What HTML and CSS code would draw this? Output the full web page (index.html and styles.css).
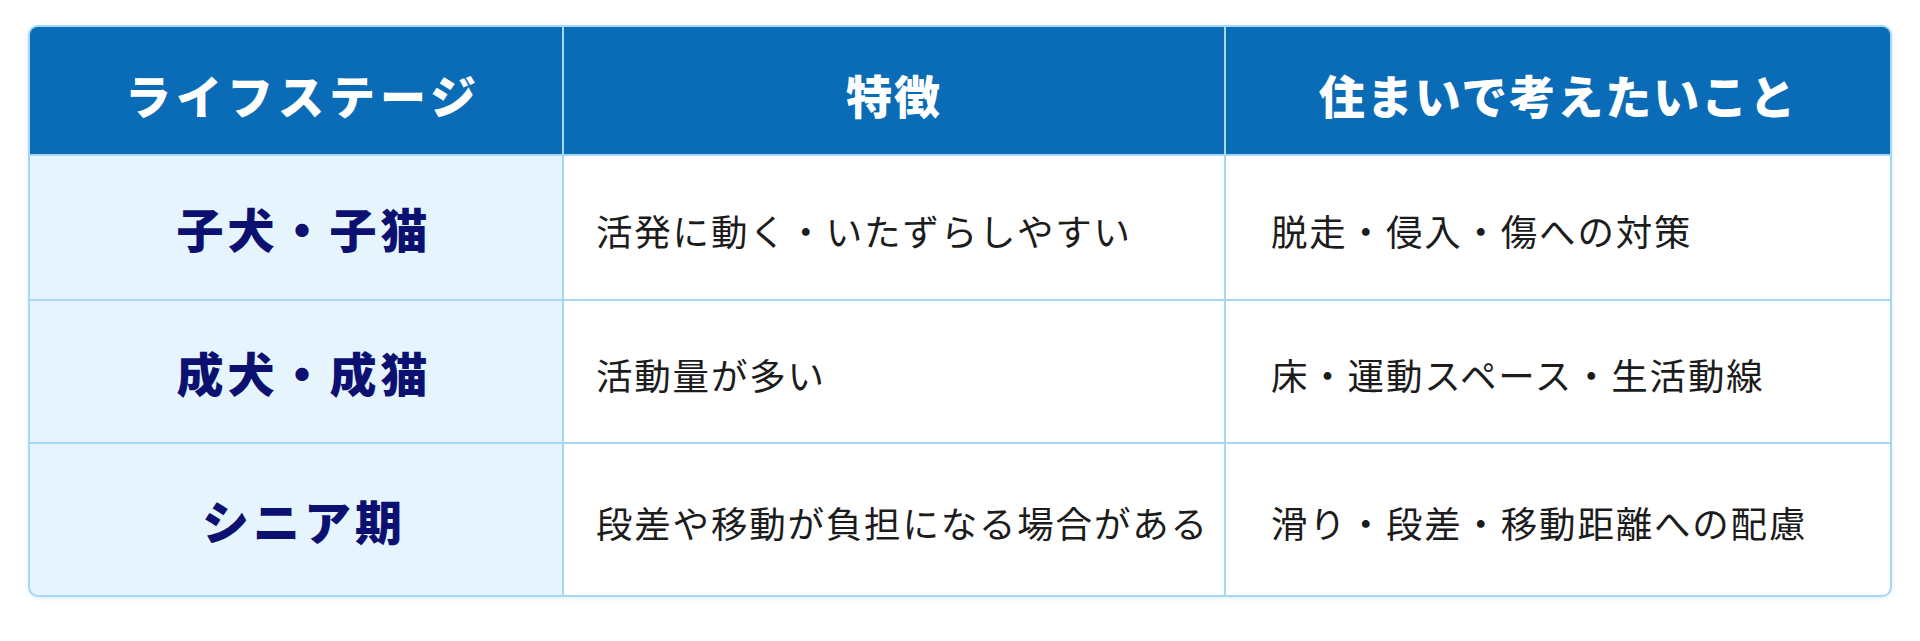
FILE: index.html
```html
<!DOCTYPE html>
<html lang="ja">
<head>
<meta charset="utf-8">
<title>ライフステージ別の住まい</title>
<link rel="stylesheet" href="styles.css">
</head>
<body>
<div class="page">
  <div class="table">
    <div class="cell head wide">ライフステージ</div>
    <div class="cell head">特徴</div>
    <div class="cell head">住まいで考えたいこと</div>

    <div class="cell label">子犬・子猫</div>
    <div class="cell body c2">活発に動く・いたずらしやすい</div>
    <div class="cell body c3">脱走・侵入・傷への対策</div>

    <div class="cell label">成犬・成猫</div>
    <div class="cell body c2">活動量が多い</div>
    <div class="cell body c3">床・運動スペース・生活動線</div>

    <div class="cell label">シニア期</div>
    <div class="cell body c2">段差や移動が負担になる場合がある</div>
    <div class="cell body c3">滑り・段差・移動距離への配慮</div>
  </div>
</div>
</body>
</html>
```

FILE: styles.css
```css
* { box-sizing: border-box; }
html, body {
  margin: 0;
  padding: 0;
  background: #ffffff;
}
body {
  font-family: "Noto Sans CJK JP", "Noto Sans", sans-serif;
  width: 1920px;
  height: 641px;
  overflow: hidden;
}
.page {
  padding: 25px 28px 0 28px;
}
.table {
  width: 1864px;
  height: 572px;
  display: grid;
  grid-template-columns: 532px 660px 1fr;
  grid-template-rows: 127px 143px 141px 1fr;
  gap: 2px;
  background: #a6d7f5;
  border: 2px solid #a6d7f5;
  border-radius: 10px;
  overflow: hidden;
  box-shadow: 0 1px 4px rgba(120, 180, 220, 0.25);
}
.cell {
  display: flex;
  align-items: center;
}
.head {
  background: #0a6bb6;
  color: #ffffff;
  font-weight: 800;
  font-size: 46px;
  letter-spacing: 2px;
  justify-content: center;
  padding-top: 6px;
}
.head.wide {
  letter-spacing: 5px;
  padding-left: 14px;
}
.label {
  background: #e5f4fd;
  color: #0c1070;
  font-weight: 900;
  font-size: 47px;
  letter-spacing: 4px;
  justify-content: center;
  padding-left: 16px;
}
.body {
  background: #ffffff;
  color: #1c1c1c;
  font-weight: 400;
  font-size: 36.5px;
  letter-spacing: 1.8px;
  padding-top: 6px;
}
.c2 { padding-left: 32px; }
.c3 { padding-left: 45px; }
```
